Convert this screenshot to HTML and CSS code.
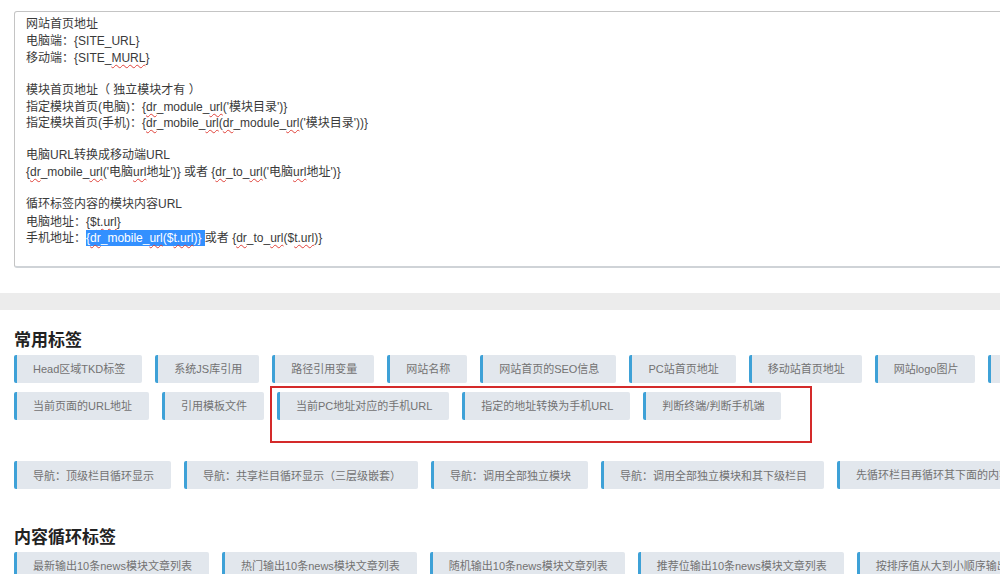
FILE: index.html
```html
<!DOCTYPE html>
<html lang="zh-CN">
<head>
<meta charset="utf-8">
<title>标签</title>
<link rel="stylesheet" href="styles.css">
</head>
<body>
<div class="page">
  <div class="code-box">
    <div class="line">网站首页地址</div>
    <div class="line">电脑端<span class="colon">：</span>{SITE_URL}</div>
    <div class="line">移动端<span class="colon">：</span>{SITE_<span class="sp">MURL</span>}</div>
    <div class="line blank"></div>
    <div class="line">模块首页地址（ 独立模块才有 ）</div>
    <div class="line">指定模块首页(电脑)<span class="colon">：</span>{<span class="sp">dr</span>_module_<span class="sp">url</span>('模块目录')}</div>
    <div class="line">指定模块首页(手机)<span class="colon">：</span>{<span class="sp">dr</span>_mobile_<span class="sp">url</span>(<span class="sp">dr</span>_module_<span class="sp">url</span>('模块目录'))}</div>
    <div class="line blank"></div>
    <div class="line">电脑URL转换成移动端URL</div>
    <div class="line">{<span class="sp">dr</span>_mobile_<span class="sp">url</span>('电脑<span class="sp">url</span>地址')} 或者 {<span class="sp">dr</span>_to_<span class="sp">url</span>('电脑<span class="sp">url</span>地址')}</div>
    <div class="line blank"></div>
    <div class="line">循环标签内容的模块内容URL</div>
    <div class="line">电脑地址<span class="colon">：</span>{$<span class="sp">t.url</span>}</div>
    <div class="line">手机地址<span class="colon">：</span><span class="sel">{<span class="sp">dr</span>_mobile_<span class="sp">url</span>($<span class="sp">t.url</span>)} </span>或者 {<span class="sp">dr</span>_to_<span class="sp">url</span>($<span class="sp">t.url</span>)}</div>
  </div>

  <div class="band"></div>

  <section class="tag-section">
    <h2 class="sec-title">常用标签</h2>
    <div class="tag-row">
      <span class="tag">Head区域TKD标签</span>
      <span class="tag">系统JS库引用</span>
      <span class="tag">路径引用变量</span>
      <span class="tag">网站名称</span>
      <span class="tag">网站首页的SEO信息</span>
      <span class="tag">PC站首页地址</span>
      <span class="tag">移动站首页地址</span>
      <span class="tag">网站logo图片</span>
      <span class="tag">网站版权信息</span>
    </div>
    <div class="tag-row">
      <span class="tag">当前页面的URL地址</span>
      <span class="tag">引用模板文件</span>
      <span class="tag">当前PC地址对应的手机URL</span>
      <span class="tag">指定的地址转换为手机URL</span>
      <span class="tag">判断终端/判断手机端</span>
    </div>
    <div class="tag-row spaced">
      <span class="tag">导航<span class="colon">：</span>顶级栏目循环显示</span>
      <span class="tag">导航<span class="colon">：</span>共享栏目循环显示（三层级嵌套）</span>
      <span class="tag">导航<span class="colon">：</span>调用全部独立模块</span>
      <span class="tag">导航<span class="colon">：</span>调用全部独立模块和其下级栏目</span>
      <span class="tag">先循环栏目再循环其下面的内容</span>
    </div>
  </section>

  <section class="tag-section second">
    <h2 class="sec-title">内容循环标签</h2>
    <div class="tag-row">
      <span class="tag">最新输出10条news模块文章列表</span>
      <span class="tag">热门输出10条news模块文章列表</span>
      <span class="tag">随机输出10条news模块文章列表</span>
      <span class="tag">推荐位输出10条news模块文章列表</span>
      <span class="tag">按排序值从大到小顺序输出10条news模块文章列表</span>
    </div>
  </section>

  <div class="mark-box"></div>
</div>
</body>
</html>
```

FILE: styles.css
```css
html, body {
  margin: 0;
  padding: 0;
  background: #fff;
  overflow: hidden;
}
.page {
  position: relative;
  width: 1000px;
  height: 574px;
  overflow: hidden;
  font-family: "Liberation Sans", "Noto Sans CJK SC", sans-serif;
  color: #333;
}
.colon {
  font-family: "Noto Sans CJK JP", sans-serif;
}
.code-box {
  margin: 11px 0 0 14px;
  width: 1010px;
  height: 257px;
  box-sizing: border-box;
  border: 1px solid #c4c4c4;
  border-bottom: 2px solid #cfd3d7;
  border-radius: 3px;
  padding: 4px 11px;
  font-size: 12px;
  line-height: 16.4px;
  color: #3a3a3a;
}
.line {
  white-space: nowrap;
  height: 16.4px;
}
.sp {
  text-decoration: underline wavy #e0423a;
  text-decoration-thickness: 1px;
  text-underline-offset: 2px;
  text-decoration-skip-ink: none;
}
.sel {
  background: #3390ff;
  color: #fff;
  padding: 1px 0 1px;
}
.band {
  margin-top: 25px;
  height: 17px;
  background: #ececec;
}
.tag-section {
  padding: 17px 0 0 14px;
}
.tag-section.second {
  padding-top: 26px;
}
.sec-title {
  margin: 0 0 4px;
  font-size: 17px;
  line-height: 24px;
  font-weight: bold;
  color: #222;
  font-family: "Noto Sans CJK SC", sans-serif;
}
.tag-row {
  display: flex;
  flex-wrap: nowrap;
  gap: 13px;
  margin-bottom: 9px;
}
.tag-row.spaced {
  margin-top: 41px;
}
.tag {
  flex: none;
  box-sizing: border-box;
  height: 28px;
  line-height: 28px;
  padding: 0 17px 0 16px;
  border-left: 3px solid #3ea1d7;
  border-radius: 2px;
  background: #e2e7ed;
  color: #727272;
  font-size: 11px;
  font-family: "Liberation Sans", "Noto Sans CJK SC", sans-serif;
  white-space: nowrap;
}
.mark-box {
  position: absolute;
  left: 270px;
  top: 386px;
  width: 542px;
  height: 57px;
  box-sizing: border-box;
  border: 2px solid #d42a2a;
}
```
